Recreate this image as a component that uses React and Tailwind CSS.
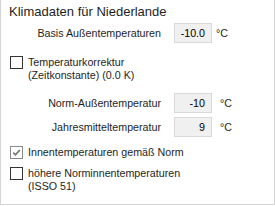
export default function App() {
  const Box = ({ checked }) => (
    <div className={`w-[13px] h-[13px] border ${checked ? "border-[#8a8a8a]" : "border-[#333]"} bg-white flex items-center justify-center shrink-0`}>
      {checked && (
        <svg width="9" height="9" viewBox="0 0 9 9">
          <path d="M1.2 4.6 L3.5 6.8 L7.8 2" stroke="#777" strokeWidth="1.8" fill="none" />
        </svg>
      )}
    </div>
  );
  const Field = ({ label, value, gap }) => (
    <div className="flex items-center h-[20px]">
      <div className="w-[152px] text-right">{label}</div>
      <div className="ml-[13px] w-[38px] h-[20px] bg-[#f0f0f0] border border-[#d9d9d9] flex items-center justify-end pr-[6px] text-black">{value}</div>
      <div className={gap}>°C</div>
    </div>
  );
  return (
    <div className="w-[275px] h-[206px] bg-white text-[#1e1e1e] text-[10.7px] leading-[13px]" style={{ fontFamily: "'Liberation Sans', Arial, sans-serif" }}>
      <div className="w-[275px] h-[205px] border-l border-r border-b border-[#d4d4d4] px-[8px] pt-[3px]">
        <div className="text-[13px] leading-[17px]">Klimadaten für Niederlande</div>
        <div className="mt-[3px]">
          <Field label="Basis Außentemperaturen" value="-10.0" gap="ml-[4px]" />
        </div>
        <div className="flex items-start mt-[13px] ml-[1px]">
          <Box />
          <div className="ml-[5px]">Temperaturkorrektur<br />(Zeitkonstante) (0.0 K)</div>
        </div>
        <div className="mt-[11px]">
          <Field label="Norm-Außentemperatur" value="-10" gap="ml-[8px]" />
        </div>
        <div className="mt-[4px]">
          <Field label="Jahresmitteltemperatur" value="9" gap="ml-[8px]" />
        </div>
        <div className="flex items-center mt-[9px] ml-[1px]">
          <Box checked />
          <div className="ml-[5px]">Innentemperaturen gemäß Norm</div>
        </div>
        <div className="flex items-start mt-[8px] ml-[1px]">
          <Box />
          <div className="ml-[5px]">höhere Norminnentemperaturen<br />(ISSO 51)</div>
        </div>
      </div>
    </div>
  );
}
